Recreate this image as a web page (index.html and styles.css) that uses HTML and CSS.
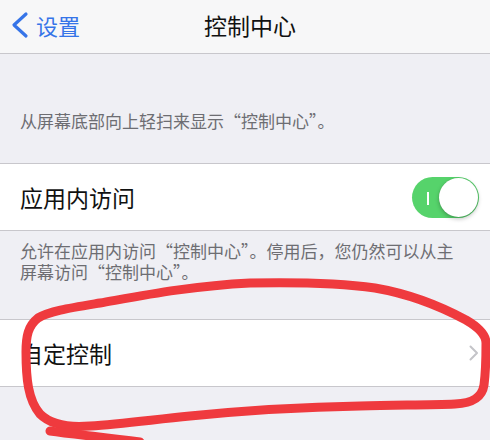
FILE: index.html
```html
<!DOCTYPE html>
<html lang="zh-CN">
<head>
<meta charset="utf-8">
<title>控制中心</title>
<link rel="stylesheet" href="styles.css">
</head>
<body>
<div class="page">
  <header class="nav">
    <div class="back">
      <svg class="back-icon" width="18" height="28" viewBox="0 0 18 28"><polyline points="15,3 3,14 15,25" fill="none" stroke="#3674e8" stroke-width="3.2" stroke-linecap="round" stroke-linejoin="round"/></svg>
      <span class="back-text">设置</span>
    </div>
    <div class="title">控制中心</div>
    <div class="spacer"></div>
  </header>

  <p class="section-header">从屏幕底部向上轻扫来显示“控制中心”。</p>

  <div class="row">
    <span class="row-label">应用内访问</span>
    <div class="toggle">
      <span class="toggle-mark"></span>
      <span class="knob"></span>
    </div>
  </div>

  <p class="section-footer">允许在应用内访问“控制中心”。停用后，您仍然可以从主屏幕访问“控制中心”。</p>

  <div class="row">
    <span class="row-label">自定控制</span>
    <svg class="chevron" width="10" height="16" viewBox="0 0 10 16"><polyline points="1.5,1.5 8,8 1.5,14.5" fill="none" stroke="#c4c4c8" stroke-width="2" stroke-linecap="round" stroke-linejoin="round"/></svg>
  </div>

  <svg class="scribble" width="490" height="440" viewBox="0 0 490 440">
    <path d="M 250 283 C 190 286, 140 296, 100 303 C 70 308, 50 311, 38 318 C 28 326, 26 336, 26 352 C 26 378, 28 400, 40 414 C 50 424, 66 428, 90 426 C 120 424, 150 420, 190 416 C 240 411, 300 407, 360 406 C 400 405, 430 405, 455 404 C 472 403, 482 398, 484 385 C 486 370, 486 355, 486 343 C 486 334, 478 327, 466 320 C 440 306, 410 294, 375 288 C 340 283, 300 282, 250 283 Z" fill="none" stroke="#ef3a3e" stroke-width="9" stroke-linecap="round" stroke-linejoin="round"/>
    <path d="M 50 431 C 72 434, 100 437, 140 442" fill="none" stroke="#ef3a3e" stroke-width="9" stroke-linecap="round"/>
  </svg>
</div>
</body>
</html>
```

FILE: styles.css
```css
html, body {
  margin: 0;
  padding: 0;
  overflow: hidden;
}

body {
  background: #efeff4;
  font-family: "Noto Sans CJK SC", "Noto Sans", sans-serif;
}

.page {
  position: relative;
  width: 490px;
  min-height: 440px;
  background: #efeff4;
}

.nav {
  display: grid;
  grid-template-columns: 1fr auto 1fr;
  align-items: center;
  height: 53px;
  padding: 0 1px 0 11px;
  background: #f7f7f8;
  border-bottom: 1px solid #c8c7cc;
}

.back {
  display: flex;
  align-items: center;
  gap: 7px;
  margin-top: -3px;
}

.back-icon {
  display: block;
}

.back-text {
  font-size: 22px;
  color: #3674e8;
  line-height: 28px;
}

.title {
  font-size: 23px;
  color: #111;
  line-height: 28px;
  margin-top: -3px;
}

.section-header {
  margin: 0;
  padding: 56px 20px 31px;
  font-size: 17px;
  line-height: 22px;
  color: #6d6d72;
}

.row {
  display: flex;
  align-items: center;
  justify-content: space-between;
  height: 66px;
  padding: 0 11px 0 20px;
  background: #fff;
  border-top: 1px solid #c8c7cc;
  border-bottom: 1px solid #c8c7cc;
}

.row-label {
  font-size: 23px;
  color: #111;
  line-height: 30px;
}

.toggle {
  position: relative;
  width: 67px;
  height: 41px;
  border-radius: 21px;
  background: #56d36b;
}

.toggle-mark {
  position: absolute;
  left: 15px;
  top: 15px;
  width: 1.5px;
  height: 13px;
  background: #fff;
}

.knob {
  position: absolute;
  right: 1px;
  top: 1px;
  width: 39px;
  height: 39px;
  border-radius: 50%;
  background: #fff;
  box-shadow: 0 2px 4px rgba(0, 0, 0, 0.25), 0 0 1px rgba(0, 0, 0, 0.2);
}

.section-footer {
  margin: 0;
  padding: 9px 20px 37px;
  font-size: 17px;
  line-height: 21px;
  color: #6d6d72;
}

.chevron {
  display: block;
  margin-right: 0;
}

.scribble {
  position: absolute;
  left: 0;
  top: 0;
  pointer-events: none;
}
```
